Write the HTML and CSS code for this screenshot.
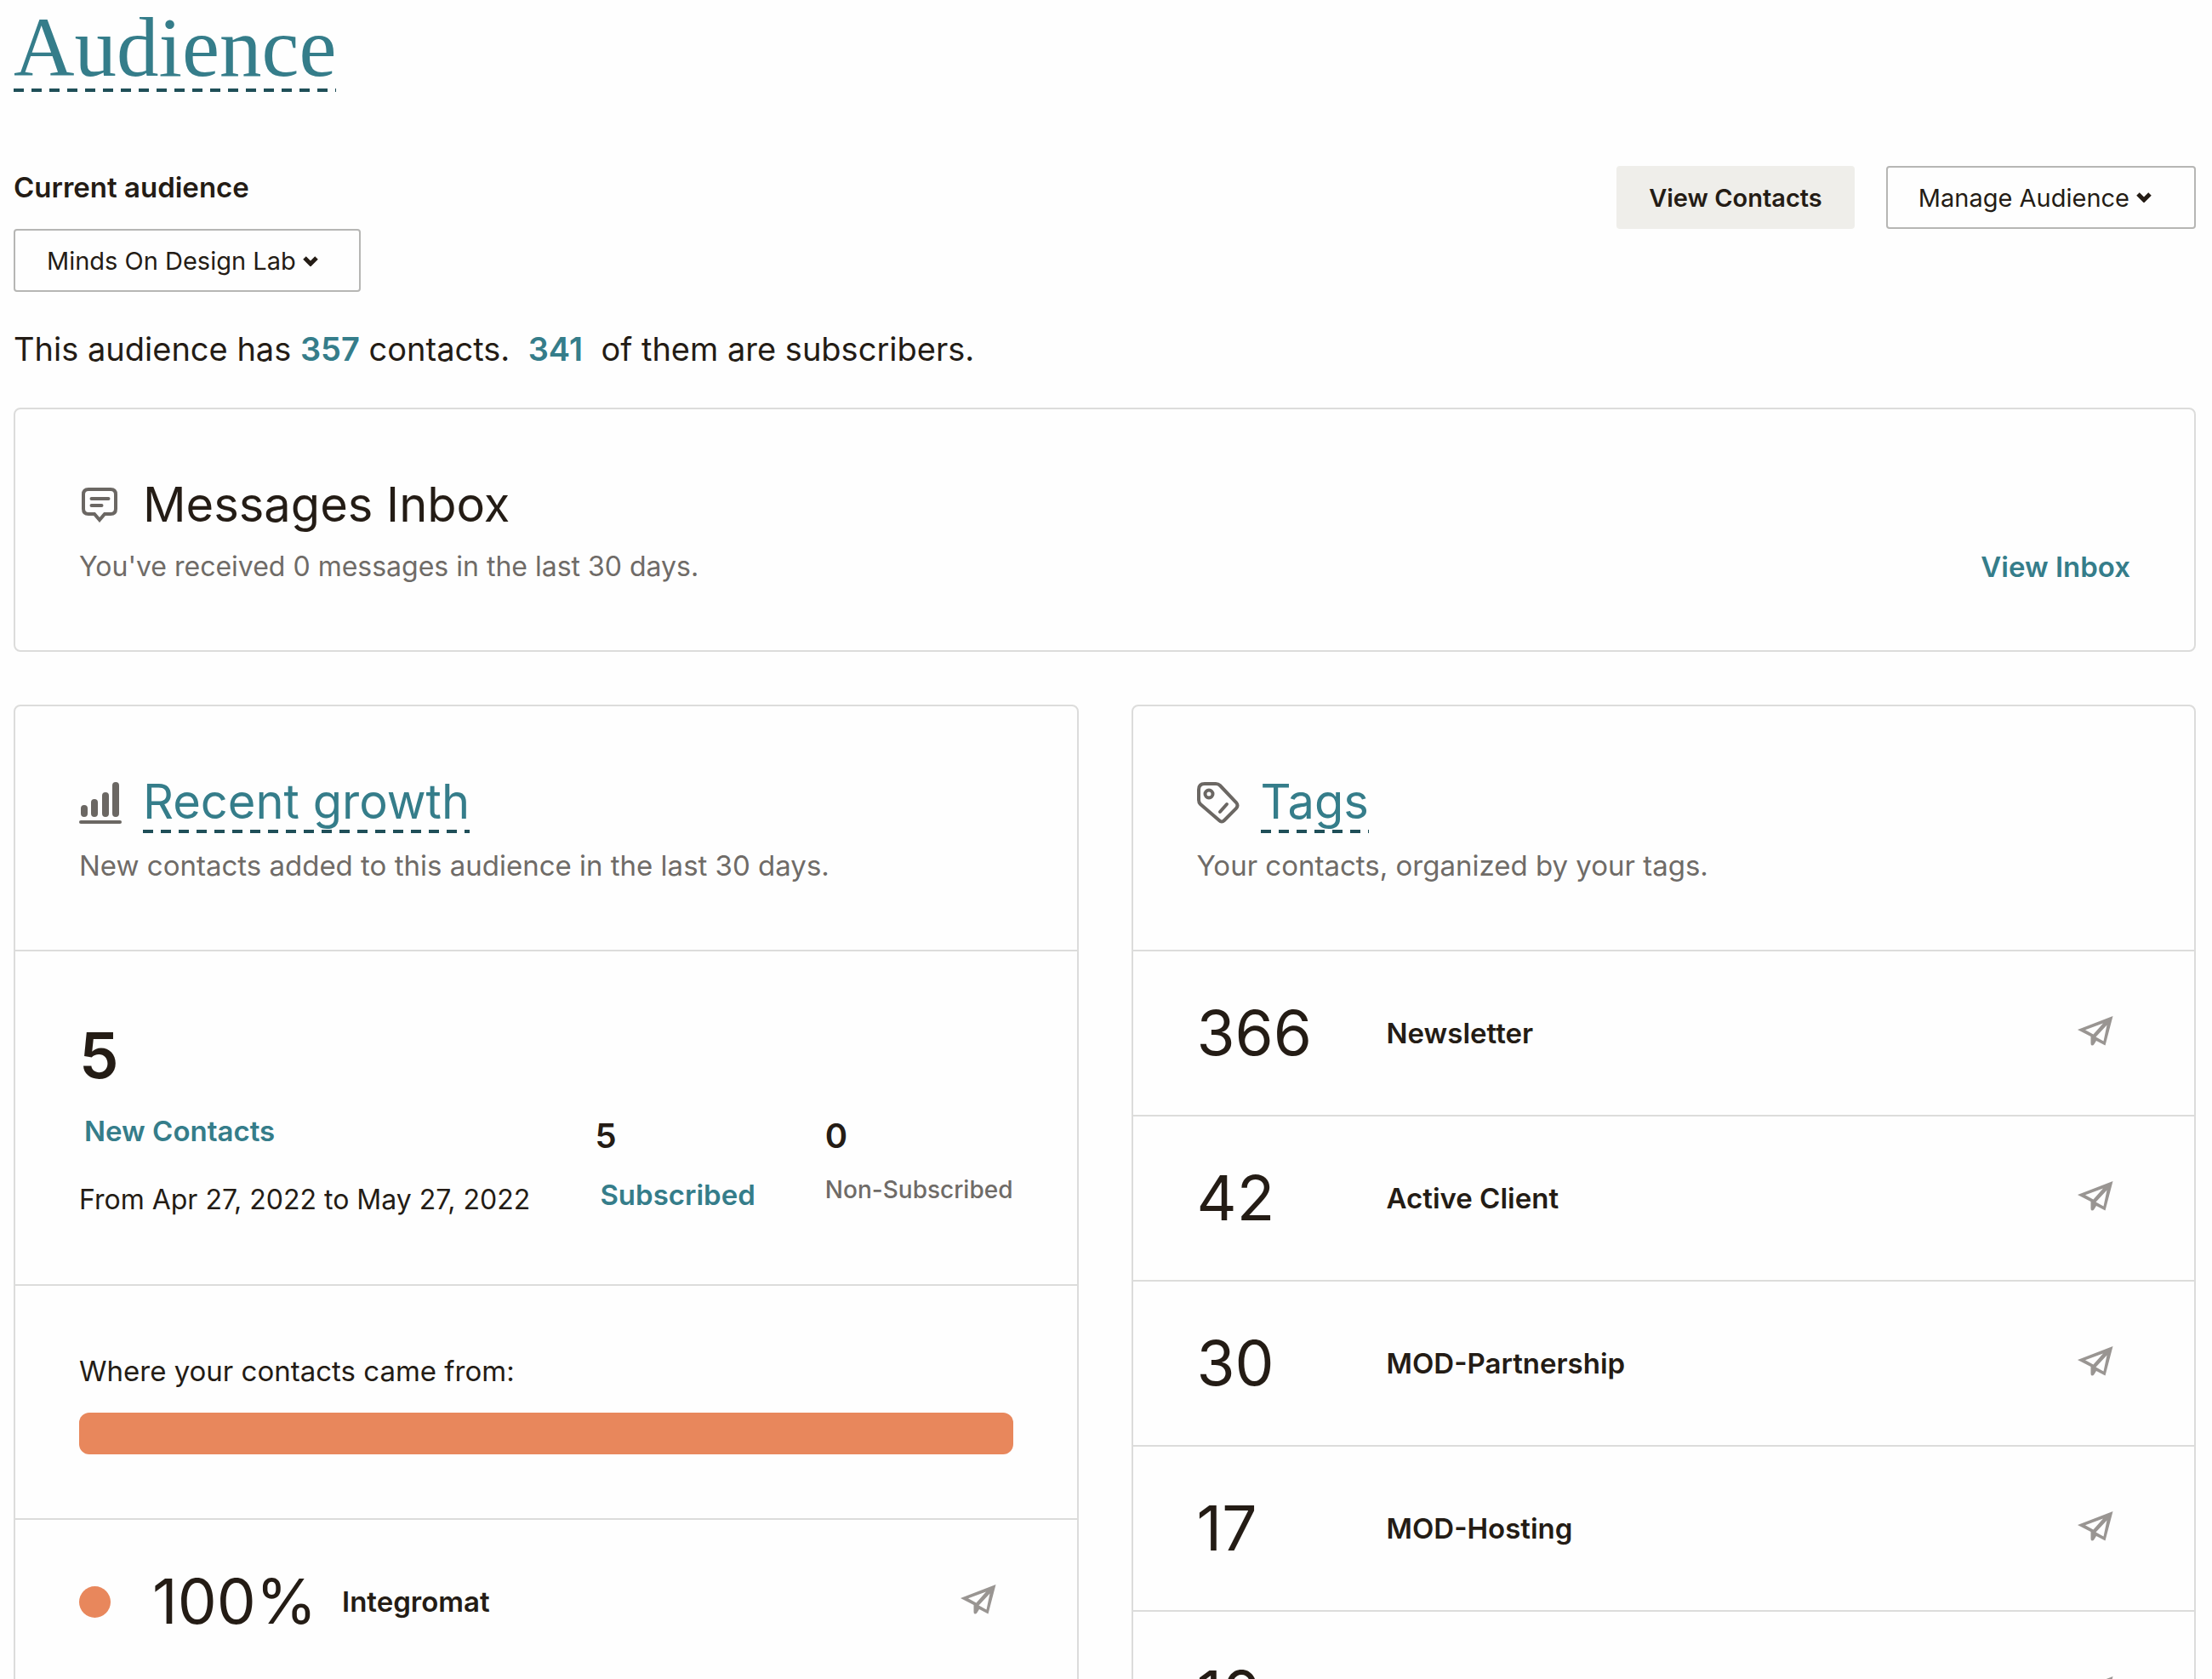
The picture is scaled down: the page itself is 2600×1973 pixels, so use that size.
FILE: index.html
```html
<!DOCTYPE html>
<html lang="en">
<head>
	<title>Audience</title>
	<meta charset="utf-8">
	<link rel="stylesheet" href="styles.css">
</head>
<body>
	<!--shared icons-->
	<svg class="sprite" aria-hidden="true">
		<symbol id="plane" viewBox="0 0 42 35">
			<path fill-rule="evenodd" d="M41.500 0L0 16l15.500 8v8q0 2.500 1.500 2.500 1.500 0 2.500-1.500l2.500-4 10.500 5.500zM9 16.300L30 8.500 18.500 21.500zM34.500 10.500L30.500 29.500 21.500 24.500z"/>
		</symbol>
		<symbol id="chevron" viewBox="0 0 18 12">
			<path fill="none" stroke="currentColor" stroke-width="5" d="M2 2l7 7 7-7"/>
		</symbol>
	</svg>

	<div class="page">
		<h1><a class="dashed" href="#">Audience</a></h1>

		<div class="toolbar">
			<div class="current">
				<label for="audience">Current audience</label>
				<div class="select">
					<select id="audience">
						<option>Minds On Design Lab</option>
					</select>
					<svg class="chevron"><use href="#chevron"/></svg>
				</div>
			</div>
			<div class="actions">
				<button type="button" class="btn btn_grey">View Contacts</button>
				<button type="button" class="btn btn_menu">Manage Audience <svg class="chevron"><use href="#chevron"/></svg></button>
			</div>
		</div>

		<p class="summary">This audience has <a href="#">357</a> contacts.&nbsp; <a href="#">341</a>&nbsp; of them are subscribers.</p>

		<!--messages-->
		<section class="card head">
			<h2>
				<span class="icon">
					<svg width="42" height="42" viewBox="0 0 42 42" fill="none" stroke="currentColor" stroke-width="4" stroke-linecap="round">
						<path d="M8 3h26q6 0 6 6v17q0 6-6 6h-7l-6 7-6-7H8q-6 0-6-6V9q0-6 6-6z"/>
						<path d="M11.500 14h20M11.500 22h12"/>
					</svg>
				</span>
				<span>Messages Inbox</span>
			</h2>
			<div class="sub">
				<p>You've received 0 messages in the last 30 days.</p>
				<a href="#">View Inbox</a>
			</div>
		</section>

		<div class="columns">
			<!--recent growth-->
			<section class="card">
				<div class="head">
					<h2>
						<span class="icon">
							<svg width="50" height="51" viewBox="0 0 50 51" stroke="currentColor" stroke-width="8" stroke-linecap="round">
								<path d="M6 32v6M18 25v13M31 17v21M43 5v33"/>
								<path stroke-width="4" d="M2 48h46"/>
							</svg>
						</span>
						<a class="dashed" href="#">Recent growth</a>
					</h2>
					<div class="sub"><p>New contacts added to this audience in the last 30 days.</p></div>
				</div>
				<div class="stats">
					<div class="stat main">
						<strong>5</strong>
						<a href="#">New Contacts</a>
						<p>From Apr 27, 2022 to May 27, 2022</p>
					</div>
					<div class="stat">
						<strong>5</strong>
						<a href="#">Subscribed</a>
					</div>
					<div class="stat">
						<strong>0</strong>
						<span class="muted">Non-Subscribed</span>
					</div>
				</div>
				<div class="sources">
					<p>Where your contacts came from:</p>
					<div class="bar"></div>
				</div>
				<div class="row">
					<i class="dot"></i>
					<span class="num">100%</span>
					<b>Integromat</b>
					<button type="button" class="send" aria-label="Send to Integromat"><svg><use href="#plane"/></svg></button>
				</div>
			</section>

			<!--tags-->
			<section class="card">
				<div class="head">
					<h2>
						<span class="icon">
							<svg width="50" height="51" viewBox="0 0 50 51" fill="none" stroke="currentColor" stroke-width="4" stroke-linecap="round">
								<path d="M9 3h13q3 0 5 2l19 20q3 3.500 0 7L32 46q-3 3-6 0L4 27q-2-2-2-5V10q0-7 7-7z"/>
								<circle cx="14" cy="15" r="4.500"/>
								<path d="M35 27l-8 9"/>
							</svg>
						</span>
						<a class="dashed" href="#">Tags</a>
					</h2>
					<div class="sub"><p>Your contacts, organized by your tags.</p></div>
				</div>
				<div class="row">
					<span class="num">366</span>
					<b>Newsletter</b>
					<button type="button" class="send" aria-label="Send to Newsletter"><svg><use href="#plane"/></svg></button>
				</div>
				<div class="row">
					<span class="num">42</span>
					<b>Active Client</b>
					<button type="button" class="send" aria-label="Send to Active Client"><svg><use href="#plane"/></svg></button>
				</div>
				<div class="row">
					<span class="num">30</span>
					<b>MOD-Partnership</b>
					<button type="button" class="send" aria-label="Send to MOD-Partnership"><svg><use href="#plane"/></svg></button>
				</div>
				<div class="row">
					<span class="num">17</span>
					<b>MOD-Hosting</b>
					<button type="button" class="send" aria-label="Send to MOD-Hosting"><svg><use href="#plane"/></svg></button>
				</div>
				<div class="row">
					<span class="num">10</span>
					<button type="button" class="send" aria-label="Send"><svg><use href="#plane"/></svg></button>
				</div>
			</section>
		</div>
	</div>
</body>
</html>
```
FILE: styles.css
```css
*{margin:0;padding:0;box-sizing:border-box;}
body{height:100vh;overflow:hidden;background:#fefefe;color:#241c15;font-family:Inter,"Liberation Sans",sans-serif;font-size:33px;line-height:44px;}
a{color:#357d8a;text-decoration:none;font-weight:600;}
svg{display:block;flex:none;}
.sprite{display:none;}
.page{padding:0 19px 0 16px;}
h1{font-family:"Liberation Serif",serif;font-size:99px;line-height:104px;padding-top:4px;font-weight:400;}
h1 a,h2 a{font-weight:400;}
h1 a{display:inline-block;}
.dashed{background:repeating-linear-gradient(90deg,#1f4f58 0 12px,transparent 12px 21px) left bottom/100% 4px no-repeat;}

/*toolbar*/
.toolbar{display:flex;justify-content:space-between;align-items:flex-start;margin-top:87px;}
label{display:block;line-height:50px;margin-bottom:24px;font-weight:600;}
.select{position:relative;display:inline-block;}
select,.btn{height:74px;border:2px solid #b6b6b4;border-radius:4px;background:#fefefe;color:#241c15;font-family:inherit;font-size:29px;cursor:pointer;}
select{appearance:none;display:block;padding:0 74px 0 37px;}
.chevron{width:18px;height:12px;}
.select .chevron{position:absolute;right:50px;top:32px;pointer-events:none;}
.actions{display:flex;gap:37px;}
.btn_grey{background:#efeeea;border-color:#efeeea;padding:0 36px;font-weight:600;}
.btn_menu{display:flex;align-items:center;gap:8px;padding:0 50px 0 36px;}
.summary{margin:39px 0 41px;font-size:38px;line-height:56px;}

/*cards*/
.card{border:2px solid #dcdcdb;border-radius:8px;}
.head{padding:80px 75px 77px;}
h2{display:flex;height:69px;margin-bottom:14px;font-size:56px;line-height:64px;font-weight:400;}
h2 .dashed{padding-bottom:5px;}
.icon{display:flex;align-items:center;width:75px;height:64px;color:#6b6763;}
.card.head{padding-bottom:76px;}
.card.head .icon{padding-left:3px;}
.sub{display:flex;justify-content:space-between;}
.sub p,.muted{color:#6f6b67;}
.card.head .sub p{font-size:32px;}
.columns{display:grid;grid-template-columns:1fr 1fr;gap:62px;margin-top:62px;}
.columns h2{margin-bottom:16px;}
.columns .icon{height:67px;}
.stats,.sources,.row{border-top:2px solid #dcdcdb;padding:0 75px;}

/*growth*/
.stats{display:flex;justify-content:space-between;align-items:flex-end;padding-top:82px;padding-bottom:77px;}
.stat strong{display:block;font-size:40px;line-height:56px;font-weight:600;margin-bottom:13px;}
.stat a{display:block;padding:6px;}
.stat .muted{display:block;height:56px;font-size:28px;font-weight:500;}
.main strong{font-size:74px;line-height:80px;margin-bottom:21px;}
.main p{margin-top:31px;font-size:32px;}
.sources{padding-top:78px;padding-bottom:75px;}
.bar{height:49px;margin-top:27px;border-radius:12px;background:#e8875c;}

/*rows*/
.row{display:flex;align-items:center;height:194px;}
.dot{width:37px;height:37px;margin-right:49px;border-radius:50%;background:#e8875c;}
.num{min-width:223px;font-size:73px;line-height:80px;}
.row b{font-weight:600;}
.send{margin-left:auto;padding:0 20px 6px;border:0;background:none;cursor:pointer;}
.send svg{width:42px;height:35px;fill:#999592;}
```
